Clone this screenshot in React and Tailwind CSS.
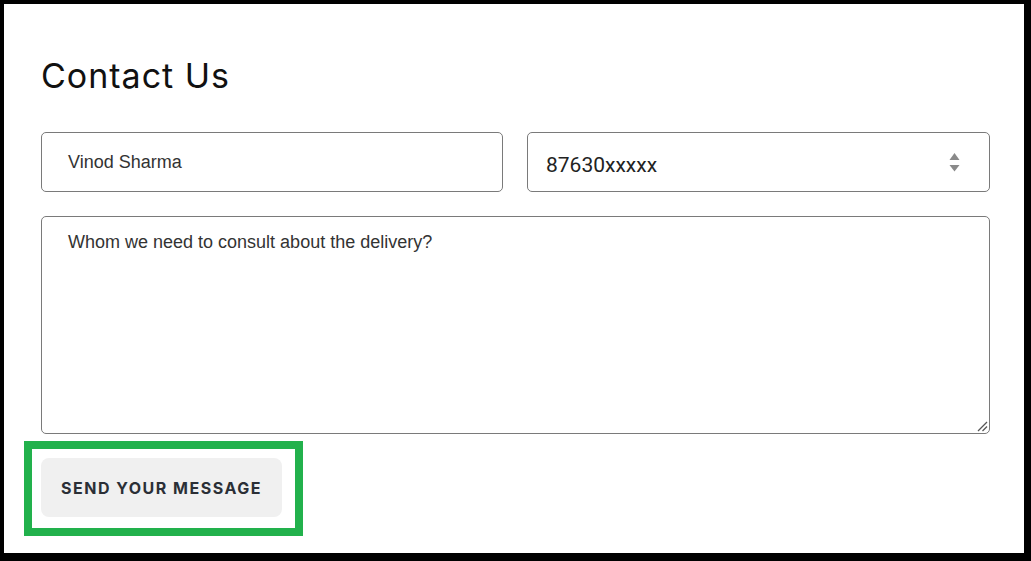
export default function App() {
  return (
    <div className="min-h-screen bg-black pt-[4px] pl-[4px] pr-[7px] pb-[8px]">
      <div className="h-[549px] bg-white pl-[37px] pr-[34px] pt-[55px]">
        <h1
          className="text-[34px] leading-[34px] tracking-[1px] text-[#111] font-normal"
          style={{ fontFamily: "Inter, sans-serif" }}
        >
          Contact Us
        </h1>
        <div className="mt-[39px] grid grid-cols-[462px_1fr] gap-[24px]">
          <div
            className="flex h-[60px] items-center rounded-[5px] border border-[#7a7a7a] pl-[26px] text-[18px] text-[#333]"
            style={{ fontFamily: '"Liberation Sans", Arial, sans-serif' }}
          >
            Vinod Sharma
          </div>
          <div className="flex h-[60px] items-center justify-between rounded-[5px] border border-[#7a7a7a] pl-[18px] pr-[29px]">
            <span
              className="pt-[8px] text-[21px] text-[#222]"
              style={{ fontFamily: "Roboto, sans-serif" }}
            >
              87630xxxxx
            </span>
            <svg width="11" height="19" viewBox="0 0 11 19" className="mt-[1px]">
              <path d="M5.5 0 L10.5 7 L0.5 7 Z" fill="#8a8a8a" />
              <path d="M0.5 12 L10.5 12 L5.5 18.5 Z" fill="#8a8a8a" />
            </svg>
          </div>
        </div>
        <div className="relative mt-[24px] h-[218px] rounded-[5px] border border-[#7a7a7a] pl-[26px] pt-[14px]">
          <p
            className="text-[18px] leading-[22px] text-[#333]"
            style={{ fontFamily: '"Liberation Sans", Arial, sans-serif' }}
          >
            Whom we need to consult about the delivery?
          </p>
          <svg
            width="12"
            height="12"
            viewBox="0 0 12 12"
            className="absolute bottom-[1px] right-[1px]"
          >
            <path d="M11 2 L2 11" stroke="#555" strokeWidth="1.3" />
            <path d="M11 6.5 L6.5 11" stroke="#555" strokeWidth="1.3" />
          </svg>
        </div>
        <div className="relative mt-[24px] w-[241px]">
          <div className="pointer-events-none absolute left-[-17px] top-[-17px] h-[95px] w-[279px] border-[8px] border-[#22b14c]" />
          <button
            className="flex h-[59px] w-[241px] items-center justify-center rounded-[8px] bg-[#f0f0f0] pt-[1px] text-[16px] font-bold tracking-[1.5px] text-[#2b2f36]"
            style={{ fontFamily: "Inter, sans-serif" }}
          >
            SEND YOUR MESSAGE
          </button>
        </div>
      </div>
    </div>
  );
}
